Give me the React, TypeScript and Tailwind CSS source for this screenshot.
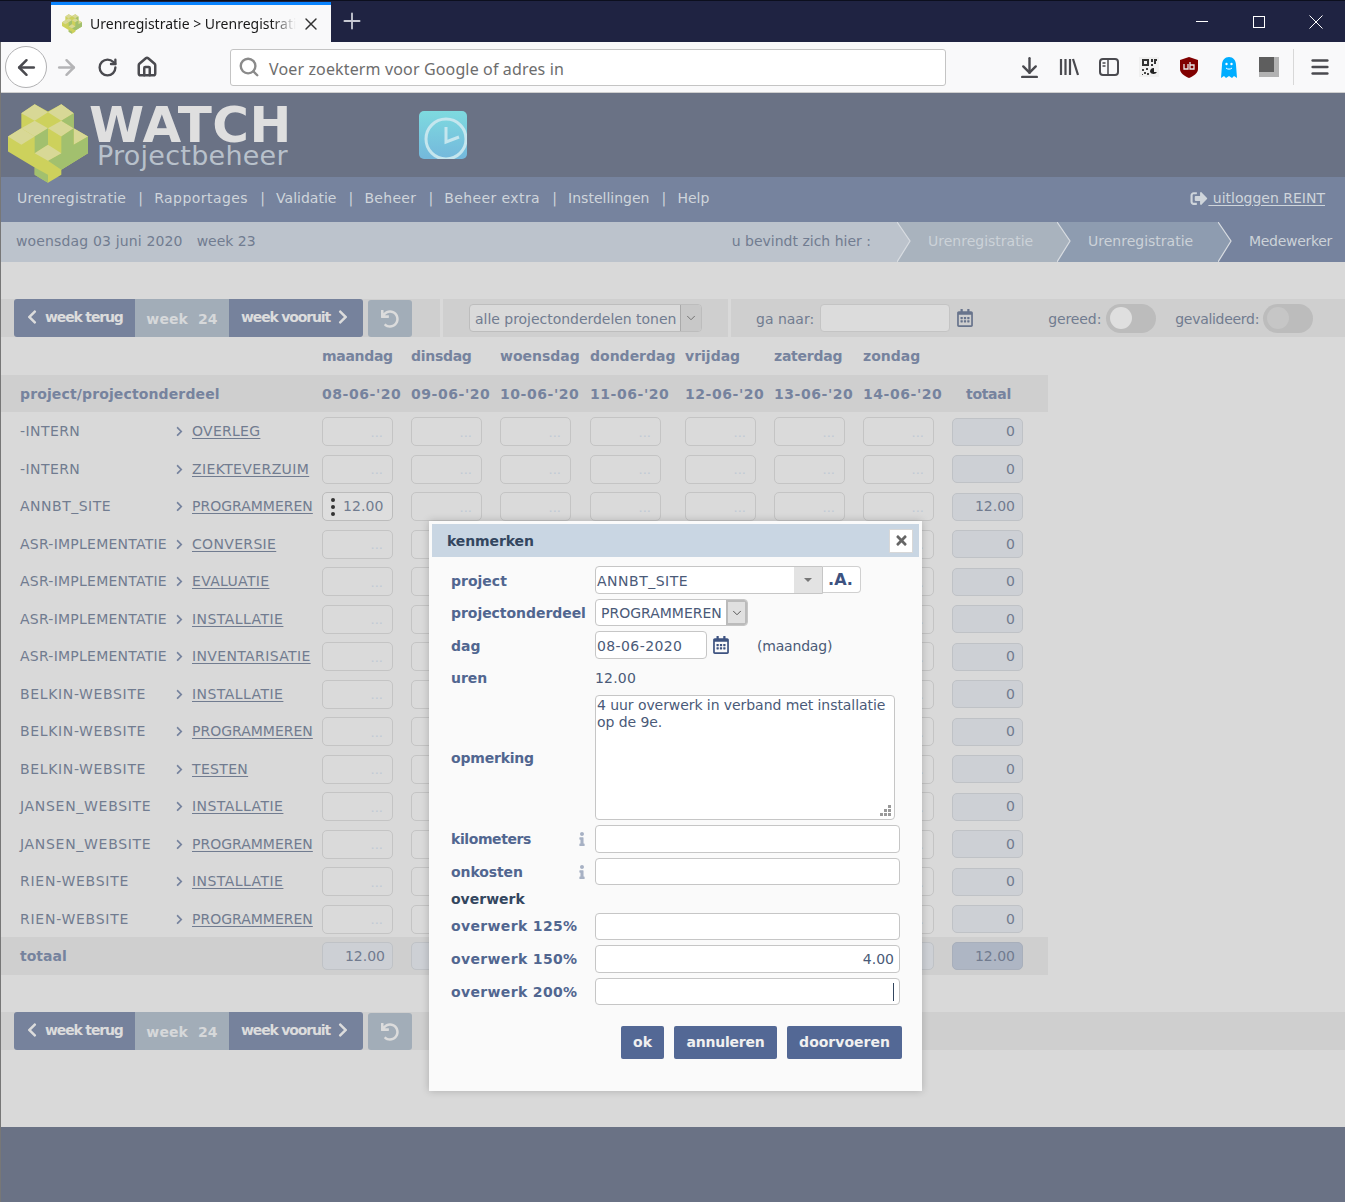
import { ArrowDownToLine, ArrowLeft, ArrowRight, ChevronDown, Home, Menu, Plus, RotateCw, Search, X } from "lucide-react";
import { FaChevronLeft, FaChevronRight, FaInfo, FaRegCalendarAlt, FaSignOutAlt, FaTimes, FaUndo } from "react-icons/fa";

const intern = "tracking-[0.43px]";
const asr = "tracking-[0.24px]";
const annbt = "tracking-[0.5px]";
const belkin = "tracking-[0.65px]";
const jansen = "tracking-[0.7px]";
const rien = "tracking-[0.75px]";

const rows = [
  ["-INTERN", intern, "OVERLEG", "tracking-[0.28px]"],
  ["-INTERN", intern, "ZIEKTEVERZUIM", "tracking-[0.38px]"],
  ["ANNBT_SITE", annbt, "PROGRAMMEREN", ""],
  ["ASR-IMPLEMENTATIE", asr, "CONVERSIE", "tracking-[0.33px]"],
  ["ASR-IMPLEMENTATIE", asr, "EVALUATIE", "tracking-[0.33px]"],
  ["ASR-IMPLEMENTATIE", asr, "INSTALLATIE", "tracking-[0.45px]"],
  ["ASR-IMPLEMENTATIE", asr, "INVENTARISATIE", "tracking-[0.36px]"],
  ["BELKIN-WEBSITE", belkin, "INSTALLATIE", "tracking-[0.45px]"],
  ["BELKIN-WEBSITE", belkin, "PROGRAMMEREN", ""],
  ["BELKIN-WEBSITE", belkin, "TESTEN", "tracking-[0.33px]"],
  ["JANSEN_WEBSITE", jansen, "INSTALLATIE", "tracking-[0.45px]"],
  ["JANSEN_WEBSITE", jansen, "PROGRAMMEREN", ""],
  ["RIEN-WEBSITE", rien, "INSTALLATIE", "tracking-[0.45px]"],
  ["RIEN-WEBSITE", rien, "PROGRAMMEREN", ""],
];

const dayColumns = "grid-cols-[89px_89px_90px_95px_89px_89px_89px_71px]";
const days = [
  ["maandag", "tracking-[-0.3px]"],
  ["dinsdag", "tracking-[-0.3px]"],
  ["woensdag", ""],
  ["donderdag", ""],
  ["vrijdag", ""],
  ["zaterdag", "tracking-[-0.25px]"],
  ["zondag", ""],
];
const dates = ["08-06-'20", "09-06-'20", "10-06-'20", "11-06-'20", "12-06-'20", "13-06-'20", "14-06-'20"];
const menu = [
  ["Urenregistratie", "tracking-[0.27px]"],
  ["Rapportages", "tracking-[0.45px]"],
  ["Validatie", ""],
  ["Beheer", "tracking-[0.3px]"],
  ["Beheer extra", "tracking-[0.4px]"],
  ["Instellingen", ""],
  ["Help", ""],
];

function LogoShape({ className }: { className: string }) {
  return (
    <svg viewBox="25 28 240 236" className={className}>
      <polygon points="65,55 105,28 145,50 185,28 222,55 222,100 265,125 265,175 185,225 185,240 145,264 105,240 105,218 25,170 25,125 65,100" fill="#cdd15c" />
      <polygon points="65,55 105,28 145,52 105,78" fill="#d8d896" />
      <polygon points="145,52 185,28 222,55 185,78" fill="#d8d896" />
      <polygon points="65,100 105,78 145,100 105,125" fill="#d8d896" />
      <polygon points="145,100 185,78 222,100 185,125" fill="#d8d896" />
      <polygon points="25,125 65,100 105,125 65,150" fill="#d8d896" />
      <polygon points="222,100 265,125 222,150" fill="#d8d896" />
      <polygon points="185,78 222,55 222,100" fill="#a2c06e" />
      <polygon points="105,125 145,100 145,150 105,175" fill="#a2c06e" />
      <polygon points="185,125 222,100 222,150 265,125 265,175 185,225 145,198 185,175" fill="#a2c06e" />
      <polygon points="105,175 145,150 185,175 145,198" fill="#d8d896" />
      <polygon points="105,218 145,240 145,264 105,240" fill="#a2c06e" />
    </svg>
  );
}

function ClockTile() {
  return (
    <div className="ml-[129px] mt-[18px] h-[48px] w-[48px] overflow-hidden rounded-[5px] bg-gradient-to-b from-[#7edadf] to-[#74b8dc]">
      <svg viewBox="0 0 48 48" className="h-full w-full" fill="none" stroke="#c5e6ee" strokeWidth="3">
        <circle cx="27" cy="28" r="20" />
        <path d="M27 16v15l13-5" />
      </svg>
    </div>
  );
}

function Chevron({ prev }: { prev: string }) {
  return (
    <svg viewBox="0 0 14 40" className="absolute left-0 top-0 h-[40px] w-[14px]">
      <polygon points="0,0 13,19 0,40" fill={prev} />
      <polyline points="0,0 13,19 0,40" fill="none" stroke="#d8dce1" strokeWidth="1.2" />
    </svg>
  );
}

function WeekBar() {
  return (
    <>
      <div className="ml-[14px] flex h-full w-[349px] overflow-hidden rounded-[3px] font-bold text-[#dcdcdc]">
        <div className="flex w-[121px] items-center bg-[#76829c] pb-[2px] pl-[13px] text-[14px] tracking-[-1.15px]">
          <FaChevronLeft className="mr-[8px] h-[16px] w-[10px]" />
          week terug
        </div>
        <div className="flex w-[94px] items-center justify-center bg-[#a2adb8] pt-[3px] text-[14px] tracking-[0.1px] text-[#d6d8da]">
          week&nbsp;&nbsp;24
        </div>
        <div className="flex w-[134px] items-center bg-[#76829c] pb-[2px] pl-[12px] text-[14px] tracking-[-1.15px]">
          week vooruit
          <FaChevronRight className="ml-[8px] h-[16px] w-[10px]" />
        </div>
      </div>
      <div className="ml-[5px] flex h-[37px] w-[44px] items-center justify-center self-end rounded-[3px] bg-[#a2adb8] text-[18px] text-[#dcdcdc]">
        <FaUndo />
      </div>
    </>
  );
}

function EmptyCell() {
  return (
    <div className="flex h-[29px] w-[71px] items-center justify-end rounded-[5px] border border-[#c4c4c4] bg-[#dadada] pr-[9px] pt-[1px] text-[13px] text-[#bfc9d5]">
      ...
    </div>
  );
}

function TotalCell({ value }: { value: string }) {
  return (
    <div className="flex h-[28px] w-[71px] items-center justify-end rounded-[5px] border border-[#bfc2c6] bg-[#cdd0d5] pr-[7px] text-[14px] text-[#717b8f]">
      {value}
    </div>
  );
}

function Toggle({ dark }: { dark?: boolean }) {
  return (
    <div className="flex h-[29px] w-[50px] items-center rounded-full bg-[#bcbcbc] pl-[4px]">
      <div className={`h-[22px] w-[22px] rounded-full ${dark ? "bg-[#c6c6c6]" : "bg-[#dfdfdf]"}`} />
    </div>
  );
}

function Row({ row, index }: { row: string[]; index: number }) {
  return (
    <div className="flex h-[37.5px] items-center text-[14px] text-[#717c90]">
      <div className={`w-[176px] pl-[20px] ${row[1]}`}>{row[0]}</div>
      <div className="flex w-[146px] items-center">
        <FaChevronRight className="mr-[9px] h-[11px] w-[7px] text-[#76839e]" />
        <span className={`underline underline-offset-2 ${row[3]}`}>{row[2]}</span>
      </div>
      <div className={`grid ${dayColumns} items-center`}>
        {days.map(([d], i) =>
          index === 2 && i === 0 ? (
            <div
              key={d}
              className="flex h-[29px] w-[71px] items-center rounded-[5px] border border-[#bcbcbc] bg-[#dedede] pl-[8px] tracking-[0.1px] text-[#717c90]"
            >
              <span className="mr-[8px] flex flex-col gap-[3px]">
                <i className="h-[4px] w-[4px] rounded-full bg-[#333]" />
                <i className="h-[4px] w-[4px] rounded-full bg-[#333]" />
                <i className="h-[4px] w-[4px] rounded-full bg-[#333]" />
              </span>
              12.00
            </div>
          ) : (
            <EmptyCell key={d} />
          ),
        )}
        <TotalCell value={index === 2 ? "12.00" : "0"} />
      </div>
    </div>
  );
}

function Label({ children, className = "", dark }: { children: React.ReactNode; className?: string; dark?: boolean }) {
  return <div className={`w-[144px] shrink-0 font-bold ${dark ? "text-[#33465f]" : "text-[#516690]"} ${className}`}>{children}</div>;
}

function Field({ value, caret }: { value?: string; caret?: boolean }) {
  return (
    <div className="flex h-full w-[305px] items-center justify-end rounded-[4px] border border-[#c6c6c6] bg-white pr-[5px] text-[#4a5a78]">
      {value}
      {caret && <span className="h-[18px] w-px bg-[#33465f]" />}
    </div>
  );
}

function Modal() {
  return (
    <div className="absolute left-[429px] top-[521px] h-[570px] w-[493px] bg-[#fafafa] p-[3px] text-[14px] text-[#4a5a78] shadow-[0_0_8px_rgba(0,0,0,0.2)]">
      <div className="flex h-[33px] w-[487px] items-center justify-between bg-[#c9d6e3] pl-[15px] pr-[6px]">
        <span className="pt-[2px] font-bold tracking-[-0.1px] text-[#33465f]">kenmerken</span>
        <span className="flex h-[24px] w-[24px] items-center justify-center border border-[#d8d8d8] bg-white text-[15px] text-[#666]">
          <FaTimes />
        </span>
      </div>
      <div className="pl-[19px]">
        <div className="mt-[9px] flex h-[28px] items-center">
          <Label className="pt-[2px]">project</Label>
          <div className="flex h-full w-[228px] items-center justify-between overflow-hidden rounded-l-[4px] border border-[#c6c6c6] bg-white pl-[1px]">
            <span className="pt-[2px] tracking-[0.5px]">ANNBT_SITE</span>
            <span className="flex h-full w-[28px] items-center justify-center bg-[#e3e3e3]">
              <svg viewBox="0 0 8 4" className="h-[4px] w-[8px]"><polygon points="0,0 8,0 4,4" fill="#777" /></svg>
            </span>
          </div>
          <div className="flex h-[27px] w-[38px] items-center justify-center self-start rounded-r-[4px] border border-l-0 border-[#d0d0d0] bg-white pr-[2px] text-[16px] font-bold text-[#3d5280]">
            .A.
          </div>
        </div>
        <div className="mt-[5px] flex h-[27px] items-center">
          <Label className="pt-[2px] tracking-[-0.05px]">projectonderdeel</Label>
          <div className="flex h-full w-[153px] items-center justify-between overflow-hidden rounded-[4px] border border-[#c6c6c6] bg-white pl-[5px]">
            <span className="pt-[2px]">PROGRAMMEREN</span>
            <span className="flex h-full w-[21px] items-center justify-center border-2 border-[#bbb] bg-[#e0e0e0] text-[#444]">
              <ChevronDown className="h-[14px] w-[14px]" strokeWidth={1.5} />
            </span>
          </div>
        </div>
        <div className="mt-[5px] flex h-[28px] items-center">
          <Label className="pt-[2px]">dag</Label>
          <div className="flex h-full w-[112px] items-center rounded-[4px] border border-[#c6c6c6] bg-white pl-[1px] pt-[2px] tracking-[0.4px]">08-06-2020</div>
          <FaRegCalendarAlt className="ml-[5px] text-[18px] text-[#3d5280]" />
          <span className="ml-[27px] pt-[2px] tracking-[-0.2px]">(maandag)</span>
        </div>
        <div className="mt-[5px] flex h-[27px] items-center">
          <Label className="pt-[2px]">uren</Label>
          <span className="pt-[2px] tracking-[0.2px]">12.00</span>
        </div>
        <div className="mt-[4px] flex h-[125px] items-center">
          <Label className="pt-[2px] tracking-[-0.2px]">opmerking</Label>
          <div className="relative h-full w-[300px] rounded-[4px] border border-[#c6c6c6] bg-white pl-[1px] pt-[1px] leading-[17px] tracking-[-0.07px]">
            4 uur overwerk in verband met installatie
            <br />
            op de 9e.
            <svg viewBox="0 0 12 12" className="absolute bottom-[2px] right-[2px] h-[12px] w-[12px]" fill="#999">
              <rect x="8" y="0" width="3" height="3" />
              <rect x="4" y="4" width="3" height="3" />
              <rect x="8" y="4" width="3" height="3" />
              <rect x="0" y="8" width="3" height="3" />
              <rect x="4" y="8" width="3" height="3" />
              <rect x="8" y="8" width="3" height="3" />
            </svg>
          </div>
        </div>
        <div className="mt-[5px] flex h-[28px] items-center">
          <Label>
            <span className="flex items-center justify-between pr-[6px]">
              <span className="tracking-[-0.4px]">kilometers</span>
              <FaInfo className="text-[14px] text-[#a7b1c4]" />
            </span>
          </Label>
          <Field />
        </div>
        <div className="mt-[5px] flex h-[27px] items-center">
          <Label className="pt-[2px]">
            <span className="flex items-center justify-between pr-[6px]">
              <span className="tracking-[-0.1px]">onkosten</span>
              <FaInfo className="-mt-[2px] text-[14px] text-[#a7b1c4]" />
            </span>
          </Label>
          <Field />
        </div>
        <div className="flex h-[28px] items-center">
          <Label dark>overwerk</Label>
        </div>
        <div className="flex h-[27px] items-center">
          <Label className="tracking-[0.35px]">overwerk 125%</Label>
          <Field />
        </div>
        <div className="mt-[5px] flex h-[28px] items-center">
          <Label className="tracking-[0.35px]">overwerk 150%</Label>
          <Field value="4.00" />
        </div>
        <div className="mt-[5px] flex h-[27px] items-center">
          <Label className="pt-[2px] tracking-[0.35px]">overwerk 200%</Label>
          <Field caret />
        </div>
        <div className="mt-[21px] flex h-[33px] gap-[10px] pl-[170px] font-bold text-[#f0f0f0]">
          <div className="flex w-[43px] items-center justify-center rounded-[2px] bg-[#536895]">ok</div>
          <div className="flex w-[103px] items-center justify-center rounded-[2px] bg-[#536895] tracking-[-0.2px]">annuleren</div>
          <div className="flex w-[115px] items-center justify-center rounded-[2px] bg-[#536895]">doorvoeren</div>
        </div>
      </div>
    </div>
  );
}

function BrowserChrome() {
  return (
    <div className="font-['Noto_Sans',sans-serif]">
      <div className="flex h-[42px] items-end border-t border-[#0c0f1e] bg-[#1f2342] pl-[51px]">
        <div className="flex h-[40px] w-[280px] items-center border-t-[3px] border-[#0a84ff] bg-[#f9f9fa] pl-[11px] text-[14px] text-[#1a1a1a]">
          <LogoShape className="mr-[8px] h-[20px] w-[20px] shrink-0" />
          <span className="w-[206px] overflow-hidden whitespace-nowrap [mask-image:linear-gradient(to_right,black_88%,transparent)]">
            Urenregistratie &gt; Urenregistratie
          </span>
          <X className="ml-[5px] h-[20px] w-[20px] text-[#333]" strokeWidth={1.7} />
        </div>
        <Plus className="mb-[8px] ml-[8px] h-[26px] w-[26px] text-[#c7c9d3]" strokeWidth={1.7} />
        <svg viewBox="0 0 132 16" className="mb-[12px] ml-auto mr-[17px] h-[16px] w-[132px]" fill="none" stroke="#fff" strokeWidth="1">
          <path d="M0 7.500h12" />
          <rect x="57.500" y="2.500" width="11" height="11" />
          <path d="M113.500 1.500l13 13M126.500 1.500l-13 13" />
        </svg>
      </div>
      <div className="flex h-[51px] items-center border-b border-[#cfcfcf] bg-[#f9f9fa] text-[#4a4a4f]">
        <div className="ml-[5px] flex h-[42px] w-[42px] items-center justify-center rounded-full border border-[#b1b1b3] bg-white">
          <ArrowLeft className="h-[25px] w-[25px]" strokeWidth={2.4} />
        </div>
        <ArrowRight className="ml-[7px] h-[25px] w-[25px] text-[#b4b4b6]" strokeWidth={2.4} />
        <RotateCw className="ml-[18px] h-[21px] w-[21px]" strokeWidth={2.7} />
        <Home className="ml-[18px] h-[22px] w-[22px]" strokeWidth={2.7} />
        <div className="ml-[72px] flex h-[37px] w-[716px] items-center rounded-[3px] border border-[#c4c4c4] bg-white pl-[7px] text-[16px] tracking-[0.14px] text-[#6d6d6d]">
          <Search className="mr-[9px] h-[22px] w-[22px] text-[#8a8a8a]" strokeWidth={2.6} />
          <span className="pt-[3px]">Voer zoekterm voor Google of adres in</span>
        </div>
        <ArrowDownToLine className="ml-[71px] h-[25px] w-[25px]" strokeWidth={2.3} />
        <svg viewBox="0 0 20 20" className="ml-[17px] h-[20px] w-[20px]" fill="none" stroke="#4a4a4f" strokeWidth="2.2">
          <path d="M2 2v16M6.500 2v16M11 2v16M14 2l5 16" />
        </svg>
        <svg viewBox="0 0 20 18" className="ml-[20px] h-[18px] w-[20px]" fill="none" stroke="#4a4a4f" strokeWidth="2">
          <rect x="1" y="1" width="18" height="16" rx="3" />
          <path d="M9 1v16M3.500 5h3M3.500 8h3" strokeWidth="1.500" />
        </svg>
        <svg viewBox="0 0 20 20" className="ml-[20px] h-[20px] w-[20px]">
          <rect width="20" height="20" fill="#f0f0f0" />
          <path d="M3 2h7v7H3zM5 4v3h3V4zM12 2h2v3h-2zM15 2h3v2h-1v3h-2zM12 7h2v2h-2z" fill="#333" fillRule="evenodd" />
          <path d="M3 12h2v2H3zM7 11h2v2H7zM5 15h2v2H5zM3 17h1v1H3zM8 16h2v2H8z" fill="#444" />
          <path d="M11 15a4 4 0 0 1 4-4v4h3a4 4 0 0 1-7 0z" fill="#222" />
        </svg>
        <svg viewBox="0 0 18 21" className="ml-[21px] h-[21px] w-[18px]">
          <path d="M9 0l9 3v9c0 4-4 7-9 9-5-2-9-5-9-9V3z" fill="#800000" />
          <path d="M4 7v5h4V7M10 5v7h4V8h-4" fill="none" stroke="#e8e8e8" strokeWidth="1.300" />
        </svg>
        <svg viewBox="0 0 16 21" className="ml-[23px] h-[21px] w-[16px]">
          <path d="M8 0c4 0 7 3 7 8l1 13-3-2-2 2-3-2-3 2-2-2-3 2L1 8c0-5 3-8 7-8z" fill="#00adff" />
          <circle cx="5.500" cy="7" r="1.200" fill="#fff" />
          <circle cx="10.500" cy="7" r="1.200" fill="#fff" />
          <path d="M5 11c1.500 1.500 4.500 1.500 6 0" stroke="#fff" fill="none" />
        </svg>
        <div className="ml-[22px] h-[20px] w-[20px] bg-[#b2b2b2]">
          <div className="h-[15px] w-[15px] bg-[#5e5e5e]" />
        </div>
        <div className="ml-[14px] h-[36px] w-px bg-[#d8d8d8]" />
        <Menu className="ml-[15px] h-[22px] w-[22px]" strokeWidth={2.8} />
      </div>
    </div>
  );
}

export default function App() {
  return (
    <div className="relative flex h-[1202px] w-[1345px] flex-col overflow-hidden bg-[#d9d9d9] font-['DejaVu_Sans',sans-serif] text-[14px]">
      <BrowserChrome />

      <header className="flex h-[84px] items-start bg-[#6a7285] pl-[8px]">
        <div className="relative z-10 mt-[11px]"><LogoShape className="h-[79px] w-[80px] shrink-0" /></div>
        <div className="ml-[1px] mt-[4px] w-[201px]">
          <div className="text-[50px] font-bold leading-[56px] tracking-[0.5px] text-[#dfdfdf]">WATCH</div>
          <div className="-mt-[12px] ml-[8px] whitespace-nowrap text-[27px] leading-[30px] tracking-[0.25px] text-[#b8c1cb]">Projectbeheer</div>
        </div>
        <ClockTile />
      </header>

      <nav className="flex h-[45px] items-center justify-between bg-[#76839e] pb-[3px] pl-[17px] pr-[20px] text-[#cfd5db]">
        <div className="flex items-center">
          {menu.map(([m, t], i) => (
            <span key={m} className="flex items-center">
              {i > 0 && <span className="w-[28px] pl-[1px] text-center text-[14px]">|</span>}
              <span className={t}>{m}</span>
            </span>
          ))}
        </div>
        <div className="flex items-center">
          <FaSignOutAlt className="w-[18px] text-[17px]" />
          <span className="underline underline-offset-2">&nbsp;uitloggen REINT</span>
        </div>
      </nav>

      <div className="flex h-[40px] items-center bg-[#bcc3cc] pb-[2px] pl-[16px] text-[#717c90]">
        <span className="tracking-[0.15px]">woensdag 03 juni 2020</span>
        <span className="ml-[14px]">week 23</span>
        <span className="ml-auto mr-[26px]">u bevindt zich hier :</span>
        <div className="relative -mb-[2px] flex h-[40px] w-[160px] items-center bg-[#a9b3be] pb-[2px] pl-[31px] text-[#ccd2d8]">
          <Chevron prev="#bcc3cc" />
          Urenregistratie
        </div>
        <div className="relative -mb-[2px] flex h-[40px] w-[161px] items-center bg-[#8e9cb0] pb-[2px] pl-[31px] text-[#ccd2d8]">
          <Chevron prev="#a9b3be" />
          Urenregistratie
        </div>
        <div className="relative -mb-[2px] flex h-[40px] w-[127px] items-center bg-[#76839e] pb-[2px] pl-[31px] tracking-[-0.3px] text-[#ccd2d8]">
          <Chevron prev="#8e9cb0" />
          Medewerker
        </div>
      </div>

      <div className="mt-[37px] flex h-[38px] items-center bg-[#cfcfcf] text-[#717c90]">
        <WeekBar />
        <div className="ml-[28px] h-full w-[3px] bg-[#d9d9d9]" />
        <div className="ml-[26px] flex h-[28px] w-[233px] items-center justify-between overflow-hidden rounded-[4px] border border-[#bdbdbd] bg-[#dadada] pl-[5px] tracking-[-0.03px]">
          <span className="pt-[2px]">alle projectonderdelen tonen</span>
          <span className="flex h-full w-[21px] items-center justify-center border-l border-[#aaa] bg-[#c8c8c8] text-[#666]">
            <ChevronDown className="h-[14px] w-[14px]" strokeWidth={1.5} />
          </span>
        </div>
        <div className="ml-[26px] h-full w-[3px] bg-[#d9d9d9]" />
        <span className="ml-[25px] pt-[2px]">ga naar:</span>
        <div className="ml-[6px] h-[28px] w-[130px] rounded-[4px] border border-[#c4c4c4] bg-[#dcdcdc]" />
        <FaRegCalendarAlt className="ml-[6px] text-[18px] text-[#68748c]" />
        <span className="ml-[74px] pt-[2px] tracking-[-0.1px]">gereed:</span>
        <div className="ml-[5px]"><Toggle /></div>
        <span className="ml-[19px] pt-[2px] tracking-[-0.3px]">gevalideerd:</span>
        <div className="ml-[4px]"><Toggle dark /></div>
      </div>

      <div className="flex h-[38px] items-center pl-[322px] font-bold text-[#76839e]">
        <div className={`grid ${dayColumns}`}>
          {days.map(([d, t]) => (
            <span key={d} className={t}>{d}</span>
          ))}
        </div>
      </div>

      <div className="flex h-[37px] w-[1048px] items-center bg-[#cfcfcf] pt-[2px] font-bold text-[#76839e]">
        <div className="w-[322px] pl-[20px] tracking-[0.13px]">project/projectonderdeel</div>
        <div className={`grid ${dayColumns}`}>
          {dates.map((d) => (
            <span key={d} className="whitespace-nowrap tracking-[0.55px]">{d}</span>
          ))}
          <span className="pl-[14px] tracking-[-0.3px]">totaal</span>
        </div>
      </div>

      <div className="h-[525px] pt-[1px]">
        {rows.map((row, i) => (
          <Row key={i} row={row} index={i} />
        ))}
      </div>

      <div className="flex h-[38px] w-[1048px] items-center bg-[#cfcfcf]">
        <div className="w-[322px] pl-[20px] font-bold text-[#76839e]">totaal</div>
        <div className={`grid ${dayColumns} items-center`}>
          <TotalCell value="12.00" />
          {days.slice(1).map(([d]) => (
            <TotalCell key={d} value="" />
          ))}
          <div className="flex h-[28px] w-[71px] items-center justify-end rounded-[5px] border border-[#a8afbb] bg-[#aeb6c4] pr-[7px] text-[#717b8f]">12.00</div>
        </div>
      </div>

      <div className="mt-[37px] flex h-[38px] items-center bg-[#cfcfcf]">
        <WeekBar />
      </div>

      <div className="mt-[77px] flex-1 bg-[#6a7285]" />

      <Modal />
      <div className="absolute bottom-0 left-0 top-[42px] w-px bg-[#777]" />
    </div>
  );
}
